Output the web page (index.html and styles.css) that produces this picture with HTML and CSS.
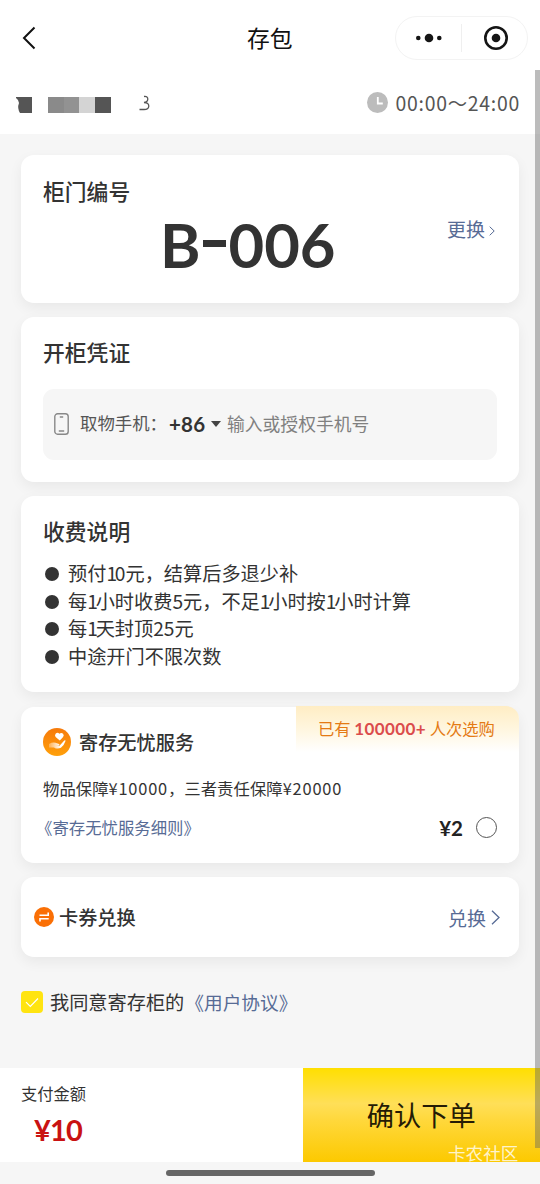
FILE: index.html
```html
<!DOCTYPE html>
<html lang="zh-CN">
<head>
<meta charset="utf-8">
<title>存包</title>
<link rel="stylesheet" href="styles.css">
</head>
<body>
<div class="app">
  <header class="navbar">
    <svg class="back" viewBox="0 0 14 24"><path d="M12.500 1.500 2 12l10.500 10.500"/></svg>
    <h1 class="nav-title">存包</h1>
    <div class="capsule">
      <svg class="dots" viewBox="0 0 26 10"><circle cx="2.300" cy="5" r="2.300"/><circle cx="13" cy="5" r="4.300"/><circle cx="23.300" cy="5" r="2.300"/></svg>
      <span class="capsule-line"></span>
      <svg class="target" viewBox="0 0 24 24"><circle class="ring" cx="12" cy="12" r="10.700"/><circle cx="12" cy="12" r="4.300"/></svg>
    </div>
  </header>
  <section class="info">
    <svg class="mosaic" viewBox="0 0 96 16"><path fill="#555" d="M0 0h16v16H4Q1 11 3 6 3 3 0 1z"/><path fill="#8a8a8a" d="M32 0h16v16H32z"/><path fill="#929292" d="M48 0h15v16H48z"/><path fill="#d4d4d4" d="M63 0h16v16H63z"/><path fill="#555" d="M79 0h16v16H79z"/></svg>
    <svg class="remnant" viewBox="0 0 11 16"><path d="M5 1.500Q9 1 8.800 4.200 8.600 7 5 7.500 10 7.500 9.800 11.200 9.500 14.500 5 14.500H.5"/></svg>
    <div class="hours">
      <svg class="clock" viewBox="0 0 21 21"><circle cx="10.500" cy="10.500" r="10.500"/><path d="M10.800 5v6.500h5"/></svg>
      <span class="hours-text">00:00～24:00</span>
    </div>
  </section>
  <main class="main">
    <section class="card locker">
      <h2 class="card-title">柜门编号</h2>
      <div class="locker-row">
        <strong class="locker-no">B<i class="dash"></i>006</strong>
        <a class="change">更换<svg class="chev-s" viewBox="0 0 6 10"><path d="M.7.700 5.200 5 .7 9.300"/></svg></a>
      </div>
    </section>
    <section class="card voucher">
      <h2 class="card-title">开柜凭证</h2>
      <div class="phone-box">
        <svg class="phone" viewBox="0 0 15 22"><rect x=".8" y=".8" width="13.400" height="20.400" rx="2.800"/><path d="M5.800 4h3.400M4.800 18h5.400"/></svg>
        <span class="phone-label">取物手机：</span>
        <b class="code">+86</b>
        <i class="caret"></i>
        <span class="placeholder">输入或授权手机号</span>
      </div>
    </section>
    <section class="card fees">
      <h2 class="card-title">收费说明</h2>
      <ul class="fee-list">
        <li class="fee"><span>预付<span class="one">1</span>0元，结算后多退少补</span></li>
        <li class="fee"><span>每<span class="one">1</span>小时收费5元，不足<span class="one">1</span>小时按<span class="one">1</span>小时计算</span></li>
        <li class="fee"><span>每<span class="one">1</span>天封顶25元</span></li>
        <li class="fee"><span>中途开门不限次数</span></li>
      </ul>
    </section>
    <section class="card service">
      <div class="promo">已有 <b class="promo-num">100000+</b> 人次选购</div>
      <div class="service-head">
        <svg class="care" viewBox="0 0 28 28">
          <defs><linearGradient id="care-bg" x1="0" y1="0" x2="0" y2="1"><stop offset="0" stop-color="#f67a0b"/><stop offset="1" stop-color="#ffa00a"/></linearGradient><linearGradient id="hand" x1="0" y1="0" x2="1" y2="0"><stop offset="0" stop-color="#ffb050"/><stop offset=".7" stop-color="#fff"/></linearGradient></defs>
          <circle cx="14" cy="14" r="14" fill="url(#care-bg)"/>
          <path fill="#fff" d="M16.800 12.600 12.600 9Q11.300 6.900 12.800 5.400q1.900-1.500 3.600.300 1.900-1.600 3.700 0 1.400 1.700-.2 3.600z"/>
          <path fill="url(#hand)" d="M6 16q3.500-2 6.500-1.200l3.500 1.200q1.300.8-.4 1.500l-2.800.200 3.700.100 4.800-5.400q1.400-.7 1.200.6-1.500 4.600-4.600 6.800-3.500 1.800-7-.400L6 19.500z"/>
        </svg>
        <h2 class="service-title">寄存无忧服务</h2>
      </div>
      <p class="service-desc">物品保障<span class="sum">¥10000</span>，三者责任保障<span class="sum">¥20000</span></p>
      <div class="service-foot">
        <a class="rules">《寄存无忧服务细则》</a>
        <b class="price">¥2</b>
        <span class="radio"></span>
      </div>
    </section>
    <section class="card coupon">
      <svg class="swap" viewBox="0 0 20 20"><circle cx="10" cy="10" r="10"/><path d="M5.500 8.200h8.700V5.500M14.700 11.800H6v2.700"/></svg>
      <h2 class="coupon-title">卡券兑换</h2>
      <a class="redeem">兑换<svg class="chev-l" viewBox="0 0 9 15"><path d="M1 .8 8 7.500 1 14.200"/></svg></a>
    </section>
    <div class="agree">
      <span class="check"><svg class="tick" viewBox="0 0 14 11"><path d="M1 5.200 5.300 9.500 13 1.500"/></svg></span>
      <span class="agree-text">我同意寄存柜的<a class="agree-link">《用户协议》</a></span>
    </div>
  </main>
  <footer class="footer">
    <div class="pay">
      <span class="pay-label">支付金额</span>
      <b class="pay-amount">¥10</b>
    </div>
    <button class="submit">确认下单</button>
  </footer>
  <div class="home"><span class="home-bar"></span></div>
  <span class="watermark">卡农社区</span>
  <span class="scrollbar"></span>
</div>
</body>
</html>
```
FILE: styles.css
```css
* { box-sizing: border-box; margin: 0; padding: 0; }
body { background: #f6f6f6; color: #333; font-family: "Noto Sans CJK SC", sans-serif; }
svg { display: block; flex: none; fill: none; }
i { font-style: normal; }
.app { position: relative; width: 540px; height: 1184px; display: flex; flex-direction: column; overflow: hidden; white-space: nowrap; }

.navbar { height: 70px; flex: none; display: flex; align-items: center; padding: 6px 12px 0 22px; background: #fff; }
.back { width: 14px; height: 24px; stroke: #111; stroke-width: 2; }
.nav-title { width: 46px; margin-left: 211px; font-size: 22.8px; font-weight: 400; line-height: 32px; color: #111; }
.capsule { width: 133px; height: 44px; margin-left: auto; display: flex; align-items: center; border: 1px solid #f3f3f3; border-radius: 22px; padding: 0 19px 0 20px; }
.dots { width: 26px; height: 10px; fill: #151515; }
.capsule-line { width: 1px; height: 28px; margin-left: 19px; background: #efefef; }
.target { width: 24px; height: 24px; margin-left: auto; fill: #151515; }
.ring { fill: none; stroke: #151515; stroke-width: 2.6; }

.info { height: 64px; flex: none; display: flex; align-items: center; padding: 2px 21px 0 16px; background: #fff; }
.mosaic { width: 96px; height: 16px; margin-top: 4px; }
.remnant { width: 11px; height: 16px; margin: -1px 0 0 27px; stroke: #555; stroke-width: 1.3; }
.hours { margin-left: auto; display: flex; align-items: center; gap: 7px; }
.clock { width: 21px; height: 21px; margin-top: -1px; fill: #bcbcbc; }
.clock path { fill: none; stroke: #fff; stroke-width: 1.8; }
.hours-text { margin-right: -1px; font-size: 19.4px; letter-spacing: .75px; line-height: 28px; color: #555; }

.main { height: 934px; flex: none; display: flex; flex-direction: column; padding: 21px 21px 0; }
.card { position: relative; flex: none; width: 498px; margin-bottom: 14.200px; background: #fff; border-radius: 13px; box-shadow: 0 5px 14px rgba(0, 0, 0, .06); }
.card-title { font-size: 21.8px; line-height: 32px; font-weight: 500; }
.locker { height: 147.500px; padding: 19.500px 22px 0; }
.locker-row { display: flex; align-items: flex-start; justify-content: space-between; padding: 0 2px 0 117px; }
.locker-no { display: flex; align-items: center; font-family: Lato, sans-serif; font-size: 61.500px; font-weight: 700; line-height: 74px; }
.dash { width: 23px; height: 7px; margin: 0 3px 0 2px; background: #333; }
.change { display: flex; align-items: center; gap: 4px; margin-top: 8.500px; font-size: 19px; line-height: 28px; color: #576b95; }
.chev-s { width: 6px; height: 10px; margin-top: 3px; stroke: #576b95; }
.voucher { height: 165px; padding: 19.500px 22px 0; }
.phone-box { display: flex; align-items: center; height: 71px; margin-top: 20.500px; padding-left: 11px; border-radius: 11px; background: #f6f6f6; }
.phone { width: 15px; height: 22px; stroke: #888; stroke-width: 1.4; }
.phone-label { width: 89px; margin: -3px 0 0 11px; font-size: 17.4px; color: #555; }
.code { width: 37px; font-family: Lato, sans-serif; font-size: 20.500px; font-weight: 700; letter-spacing: .2px; }
.caret { margin: 0 6px 0 5px; border: 5.500px solid transparent; border-top: 6px solid #444; border-bottom: 0; }
.placeholder { margin-top: -3px; font-size: 17.800px; color: #808080; }
.fees { height: 196.500px; padding: 19.500px 22px 0; }
.fee-list { list-style: none; margin-top: 13px; }
.fee { display: flex; align-items: center; gap: 9px; padding-left: 2px; font-size: 19.200px; line-height: 27.500px; }
.fee::before { content: ""; width: 14px; height: 14px; border-radius: 50%; background: #333; }
.one { letter-spacing: -2.200px; }
.service { height: 156.500px; padding: 19px 22px 0; }
.promo { position: absolute; top: -1px; right: 0; width: 223px; height: 46px; padding-left: 22px; border-radius: 0 13px 0 0; background: linear-gradient(#ffedc4, #fff6df 50%, #fff); font-size: 16.300px; line-height: 44px; color: #e47a14; }
.promo-num { font-family: Lato, sans-serif; font-size: 17px; font-weight: 700; letter-spacing: .4px; color: #db4c4c; }
.service-head { display: flex; align-items: center; gap: 8px; height: 32px; }
.care { width: 28px; height: 28px; }
.service-title, .coupon-title { font-size: 19.200px; font-weight: 500; line-height: 28px; }
.service-desc { margin-top: 18px; font-size: 16.400px; line-height: 24px; }
.sum { letter-spacing: .8px; }
.service-foot { display: flex; align-items: center; height: 28px; margin-top: 14px; }
.rules { margin: -2px 0 0 -7px; font-size: 16.400px; color: #576b95; }
.price { margin-left: auto; font-family: Lato, "Noto Sans CJK SC", sans-serif; font-size: 20.500px; font-weight: 700; color: #222; }
.radio { width: 21px; height: 21px; margin: -1px 0 0 13px; border: 1px solid #555; border-radius: 50%; }
.coupon { display: flex; align-items: center; height: 80px; padding: 0 19px 0 13px; }
.swap { width: 20px; height: 20px; fill: #fa6f05; }
.swap path { fill: none; stroke: #fff; stroke-width: 1.6; }
.coupon-title { margin: -1px 0 0 5px; }
.redeem { display: flex; align-items: center; gap: 5px; margin-left: auto; font-size: 19px; color: #576b95; }
.chev-l { width: 9px; height: 15px; stroke: #576b95; stroke-width: 1.300; }
.agree { display: flex; align-items: center; height: 30px; margin-top: 16px; font-size: 19.200px; }
.check { display: flex; align-items: center; justify-content: center; width: 22px; height: 22px; margin-right: 7px; border-radius: 4px; background: #ffe411; }
.tick { width: 14px; height: 11px; stroke: #fff; stroke-width: 1.200; }
.agree-link { color: #576b95; margin-left: 1px; font-size: 18.700px; }

.footer { display: flex; flex: none; height: 93.500px; background: #fff; }
.pay { width: 302.500px; padding: 12.500px 0 0 21px; display: flex; flex-direction: column; }
.pay-label { font-size: 16.300px; line-height: 24px; }
.pay-amount { margin: 7px 0 0 13px; font-family: Lato, sans-serif; font-size: 29px; line-height: 36px; font-weight: 700; letter-spacing: -.8px; color: #c91212; }
.submit { flex: 1; border: 0; padding-bottom: 2px; background: linear-gradient(#ffdf00, #ffdf58 38%, #ffd83c 55%, #fcc900); font: 400 27.200px "Noto Sans CJK SC", sans-serif; color: #251c05; }
.home { display: flex; justify-content: center; padding-top: 8.500px; height: 22px; }
.home-bar { width: 209px; height: 5.500px; border-radius: 3px; background: #666; }
.watermark { position: absolute; left: 448px; top: 1140px; font-size: 17.600px; line-height: 26px; color: rgba(255, 255, 255, .8); }
.scrollbar { position: absolute; right: 0; top: 70px; width: 5.500px; height: 1078px; background: rgba(100, 100, 100, .43); }
```
